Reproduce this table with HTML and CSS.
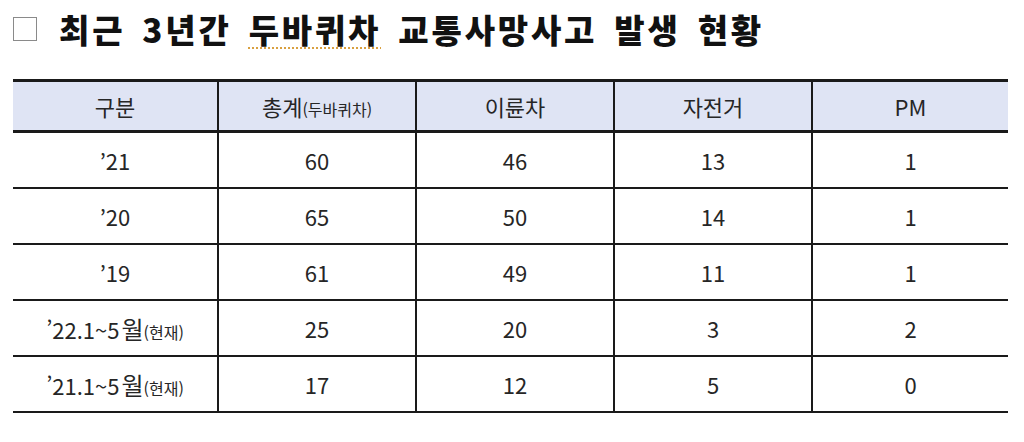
FILE: index.html
```html
<!DOCTYPE html>
<html lang="ko">
<head>
<meta charset="utf-8">
<link rel="stylesheet" href="styles.css">
</head>
<body>
<div class="page">
  <h1 class="title"><span class="box"></span><span class="title-text">최근 3년간 <span class="spell">두바퀴차</span> 교통사망사고 발생 현황</span></h1>
  <table class="stats">
    <colgroup>
      <col class="c1"><col class="c2"><col class="c3"><col class="c4"><col class="c5">
    </colgroup>
    <thead>
      <tr><th>구분</th><th>총계<span class="small">(두바퀴차)</span></th><th>이륜차</th><th>자전거</th><th>PM</th></tr>
    </thead>
    <tbody>
      <tr><td>’21</td><td>60</td><td>46</td><td>13</td><td>1</td></tr>
      <tr><td>’20</td><td>65</td><td>50</td><td>14</td><td>1</td></tr>
      <tr><td>’19</td><td>61</td><td>49</td><td>11</td><td>1</td></tr>
      <tr><td>’22.1~5<span class="mon">월</span><span class="small">(현재)</span></td><td>25</td><td>20</td><td>3</td><td>2</td></tr>
      <tr><td>’21.1~5<span class="mon">월</span><span class="small">(현재)</span></td><td>17</td><td>12</td><td>5</td><td>0</td></tr>
    </tbody>
  </table>
</div>
</body>
</html>
```
FILE: styles.css
```css
html, body {
  margin: 0;
  padding: 0;
  background: #ffffff;
}
.page {
  width: 1024px;
  height: 442px;
  padding: 0 0 0 13px;
  box-sizing: border-box;
  font-family: "Noto Sans CJK KR", "Noto Sans", sans-serif;
  color: #262626;
}
.title {
  margin: 0;
  height: 79px;
  display: flex;
  align-items: flex-start;
  padding-top: 6px;
  box-sizing: border-box;
  font-size: 33px;
  font-weight: 900;
  color: #111;
  letter-spacing: 2.8px;
  word-spacing: 5px;
  line-height: 46px;
}
.box {
  width: 22px;
  height: 22px;
  border: 1.5px solid #8a8a8a;
  margin: 11px 22px 0 0;
  flex: none;
}
.spell {
  text-decoration: underline dotted #d9a040;
  text-underline-offset: 4px;
  text-decoration-thickness: 2px;
}
.stats {
  width: 995px;
  border-collapse: collapse;
  table-layout: fixed;
}
.c1 { width: 205px; }
.c2 { width: 198px; }
.c3 { width: 198px; }
.c4 { width: 198px; }
.c5 { width: 196px; }
.stats th, .stats td {
  text-align: center;
  font-size: 22px;
  font-weight: 400;
  padding: 0;
  border-left: 2px solid #1a1a1a;
  border-bottom: 2px solid #1a1a1a;
}
.stats th:first-child, .stats td:first-child {
  border-left: none;
}
.stats th {
  background: #dfe4f4;
  height: 48px;
  border-top: 3px solid #1a1a1a;
  border-bottom: 3px solid #1a1a1a;
}
.stats td {
  height: 54px;
}
.small {
  font-size: 16px;
}
.mon {
  font-size: 24px;
  margin-left: 2px;
}
```
